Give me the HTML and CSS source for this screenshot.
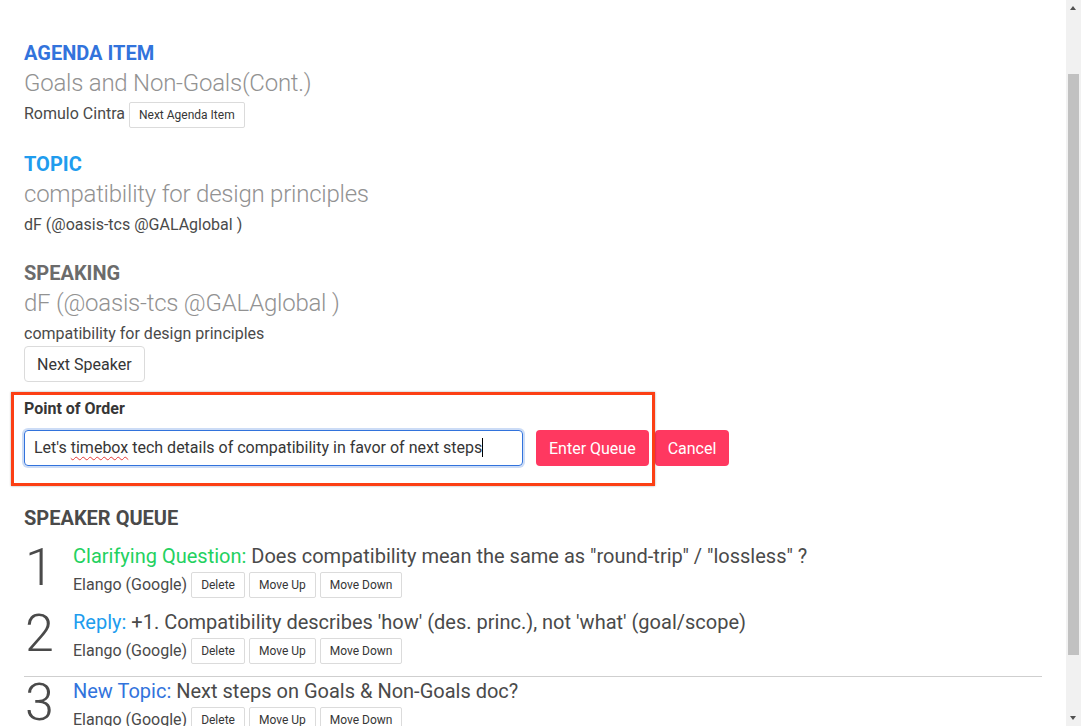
FILE: index.html
```html
<!DOCTYPE html>
<html lang="en">
<head>
<meta charset="utf-8">
<title>Speaker Queue</title>
<link rel="stylesheet" href="styles.css">
</head>
<body>
<main class="page">
  <section class="block">
    <h2 class="label label-agenda">AGENDA ITEM</h2>
    <div class="title">Goals and Non-Goals(Cont.)</div>
    <div class="meta">Romulo Cintra <button class="btn btn-small">Next Agenda Item</button></div>
  </section>

  <section class="block">
    <h2 class="label label-topic">TOPIC</h2>
    <div class="title">compatibility for design principles</div>
    <div class="meta">dF (@oasis-tcs @GALAglobal )</div>
  </section>

  <section class="block">
    <h2 class="label label-speaking">SPEAKING</h2>
    <div class="title">dF (@oasis-tcs @GALAglobal )</div>
    <div class="meta">compatibility for design principles</div>
    <div class="block-actions"><button class="btn btn-normal">Next Speaker</button></div>
  </section>

  <section class="poo">
    <div class="poo-highlight"></div>
    <div class="poo-label">Point of Order</div>
    <div class="poo-row">
      <div class="input" role="textbox">Let's <span class="misspelled">timebox</span> tech details of compatibility in favor of next steps<span class="caret"></span></div>
      <button class="btn btn-danger">Enter Queue</button>
      <button class="btn btn-danger">Cancel</button>
    </div>
  </section>

  <section class="queue">
    <h2 class="label label-queue">SPEAKER QUEUE</h2>
    <ol class="queue-list">
      <li class="queue-item">
        <div class="num">1</div>
        <div class="item-body">
          <div class="item-title"><span class="type type-question">Clarifying Question:</span> Does compatibility mean the same as "round-trip" / "lossless" ?</div>
          <div class="item-meta">Elango (Google) <button class="btn btn-small">Delete</button> <button class="btn btn-small">Move Up</button> <button class="btn btn-small">Move Down</button></div>
        </div>
      </li>
      <li class="queue-item">
        <div class="num">2</div>
        <div class="item-body">
          <div class="item-title"><span class="type type-reply">Reply:</span> +1. Compatibility describes 'how' (des. princ.), not 'what' (goal/scope)</div>
          <div class="item-meta">Elango (Google) <button class="btn btn-small">Delete</button> <button class="btn btn-small">Move Up</button> <button class="btn btn-small">Move Down</button></div>
        </div>
      </li>
      <li class="queue-item queue-item-divided">
        <div class="num">3</div>
        <div class="item-body">
          <div class="item-title"><span class="type type-topic">New Topic:</span> Next steps on Goals &amp; Non-Goals doc?</div>
          <div class="item-meta">Elango (Google) <button class="btn btn-small">Delete</button> <button class="btn btn-small">Move Up</button> <button class="btn btn-small">Move Down</button></div>
        </div>
      </li>
    </ol>
  </section>
</main>
<div class="scrollbar" aria-hidden="true">
  <span class="sb-arrow sb-up"></span>
  <span class="sb-thumb"></span>
  <span class="sb-arrow sb-down"></span>
</div>
</body>
</html>
```

FILE: styles.css
```css
html, body {
  margin: 0;
  padding: 0;
  background: #fff;
}

body {
  font-family: Roboto, "Liberation Sans", sans-serif;
  color: #4a4a4a;
  font-size: 16px;
}

.page {
  display: flex;
  flex-direction: column;
  padding: 41px 39px 64px 24px;
}

.block + .block {
  margin-top: 24px;
}

.label {
  margin: 0;
  font-size: 20px;
  line-height: 24px;
  font-weight: 700;
}

.label-agenda { color: #3273dc; }
.label-topic { color: #209cee; }
.label-speaking { color: #6b6b6b; }
.label-queue { color: #4a4a4a; }

.title {
  font-family: "Roboto Light", Roboto, "Liberation Sans", sans-serif;
  font-size: 24px;
  font-weight: 300;
  line-height: 30px;
  letter-spacing: -0.23px;
  color: #929292;
  margin-top: 3px;
  margin-bottom: 4px;
}

.meta {
  font-size: 16px;
  line-height: 24px;
  color: #4a4a4a;
}

.block-actions {
  margin-top: 0;
}

.btn {
  font-family: Roboto, "Liberation Sans", sans-serif;
  background: #fff;
  border: 1px solid #dbdbdb;
  color: #363636;
  cursor: pointer;
  box-sizing: border-box;
  vertical-align: top;
  margin: 0;
}

.btn-small {
  font-size: 12px;
  height: 26px;
  padding: 0 9px;
  border-radius: 2px;
}

.btn-normal {
  font-size: 16px;
  height: 36px;
  padding: 0 12px;
  border-radius: 4px;
}

.btn-danger {
  font-size: 16px;
  height: 36px;
  padding: 0 12px;
  border-radius: 4px;
  background: #ff3860;
  border-color: transparent;
  color: #fff;
}

.poo {
  position: relative;
  margin-top: 17px;
}

.poo-highlight {
  position: absolute;
  left: -13px;
  top: -7px;
  width: 644px;
  height: 94px;
  box-sizing: border-box;
  border: 3px solid #fc3f14;
  box-shadow: 0 0 2px rgba(0, 0, 0, 0.35);
  pointer-events: none;
  z-index: 2;
}

.poo-label {
  font-size: 16px;
  font-weight: 700;
  line-height: 20px;
  color: #363636;
  margin-bottom: 11px;
}

.poo-row {
  display: flex;
  align-items: center;
  gap: 6px;
}

.input {
  box-sizing: border-box;
  width: 499px;
  height: 36px;
  padding: 0 9px;
  border: 1px solid #3273dc;
  border-radius: 4px;
  box-shadow: 0 0 0 2px rgba(50, 115, 220, 0.25);
  font-size: 16px;
  line-height: 34px;
  color: #363636;
  margin-right: 7px;
  white-space: nowrap;
  overflow: hidden;
}

.misspelled {
  text-decoration: underline wavy #e53935;
  text-decoration-thickness: 1px;
  text-underline-offset: 3px;
}

.caret {
  display: inline-block;
  width: 1px;
  height: 19px;
  background: #000;
  vertical-align: -4px;
}

.queue {
  margin-top: 40px;
}

.queue-list {
  list-style: none;
  margin: 14px 0 0;
  padding: 0;
}

.queue-item {
  display: flex;
  margin-bottom: 12px;
}

.queue-item-divided {
  border-top: 1px solid #cfcfcf;
  padding-top: 2px;
}

.num {
  width: 49px;
  flex: none;
  font-family: "Roboto Light", Roboto, "Liberation Sans", sans-serif;
  font-size: 52px;
  font-weight: 300;
  line-height: 48px;
  color: #4a4a4a;
  padding-left: 1px;
  box-sizing: border-box;
}

.item-title {
  font-size: 20px;
  line-height: 24px;
  color: #4a4a4a;
}

.type-question { color: #23d160; }
.type-reply { color: #209cee; }
.type-topic { color: #3273dc; }

.item-meta {
  margin-top: 4px;
  font-size: 16px;
  line-height: 26px;
}

/* Browser scrollbar as it appears in the screenshot */
.scrollbar {
  position: fixed;
  top: 0;
  right: 0;
  width: 15px;
  height: 100vh;
  background: #f1f1f1;
  z-index: 5;
}

.sb-thumb {
  position: absolute;
  left: 2px;
  right: 2px;
  top: 74px;
  height: 581px;
  background: #c1c1c1;
}

.sb-arrow {
  position: absolute;
  left: 4px;
  width: 0;
  height: 0;
  border-left: 3.5px solid transparent;
  border-right: 3.5px solid transparent;
}

.sb-up {
  top: 6px;
  border-bottom: 4px solid #505050;
}

.sb-down {
  bottom: 6px;
  border-top: 4px solid #505050;
}
```
